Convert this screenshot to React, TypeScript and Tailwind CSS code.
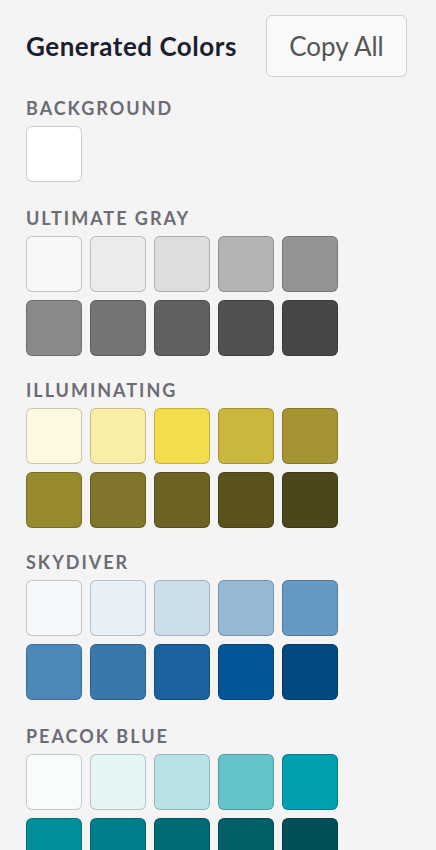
const palettes: { name: string; gap: string; colors: string[] }[] = [
  {
    name: "Ultimate Gray",
    gap: "mt-[26px]",
    colors: ["#f7f7f7", "#ececec", "#dcdddd", "#b3b4b5", "#939495", "#88898a", "#737475", "#5f6061", "#505153", "#474747"],
  },
  {
    name: "Illuminating",
    gap: "mt-6",
    colors: ["#fdf9e0", "#f8eea6", "#f4dd4c", "#cbb73e", "#a59532", "#97892d", "#80752b", "#6b6223", "#5a531e", "#4c471a"],
  },
  {
    name: "Skydiver",
    gap: "mt-6",
    colors: ["#f5f8fb", "#e8eff6", "#cddeeb", "#97b8d4", "#6699c2", "#4e88ba", "#3779ad", "#1a63a0", "#035597", "#034981"],
  },
  {
    name: "Peacok Blue",
    gap: "mt-[26px]",
    colors: ["#f8fcfd", "#e5f5f5", "#b8e3e6", "#64c3cb", "#00a0b0", "#008f9b", "#007e89", "#006c76", "#005f67", "#004e57"],
  },
];

function Swatch({ color }: { color: string }) {
  return <div className="w-14 h-14 rounded-md border border-black/20" style={{ backgroundColor: color }} />;
}

function Label({ children }: { children: string }) {
  return (
    <div className="h-5 leading-5 text-[18px] font-bold uppercase tracking-[0.11em] text-[#6b6c74]">{children}</div>
  );
}

export default function App() {
  return (
    <div className="min-h-[850px] bg-[#f4f4f4] pl-[26px] pr-[29px] pt-[15px] font-['Lato',sans-serif]">
      <div className="flex items-center justify-between">
        <h2 className="text-[26px] font-bold tracking-[0.02em] text-[#1c1e2e]">Generated Colors</h2>
        <button className="w-[141px] h-[62px] rounded-md border border-[#cfcfcf] bg-[#f9f9f9] text-[26px] text-[#555]">
          Copy All
        </button>
      </div>

      <div className="mt-[21px]">
        <Label>Background</Label>
        <div className="mt-2">
          <Swatch color="#ffffff" />
        </div>
      </div>

      {palettes.map((p) => (
        <div key={p.name} className={p.gap}>
          <Label>{p.name}</Label>
          <div className="mt-2 grid grid-cols-[repeat(5,56px)] gap-2">
            {p.colors.map((c) => (
              <Swatch key={c} color={c} />
            ))}
          </div>
        </div>
      ))}
    </div>
  );
}
